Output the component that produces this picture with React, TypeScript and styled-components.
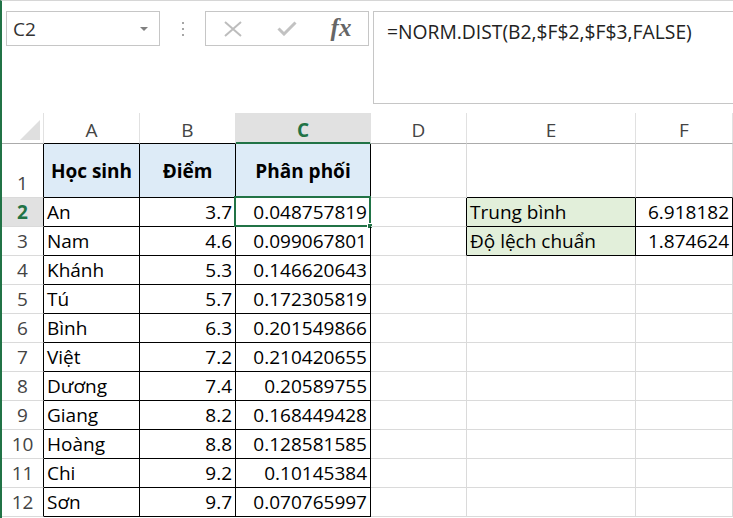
import React from "react";
import styled, { createGlobalStyle, css } from "styled-components";

const GREEN = "#217346";
const GRID = "#dadada";
const HDR_SEP = "#e1e1e1";
const BLACK = "#000";

const Global = createGlobalStyle`
  html, body { margin: 0; padding: 0; background: #fff; }
  body { font-family: "Open Sans", "Noto Sans", sans-serif; }
  * { box-sizing: border-box; }
`;

const Frame = styled.div`
  width: 733px;
  height: 518px;
  overflow: hidden;
  background: #fff;
  border-left: 2px solid ${GREEN};
  border-top: 1px solid #d6d6d6;
  display: flex;
  flex-direction: column;
`;

const Toolbar = styled.div`
  display: flex;
  align-items: flex-start;
  height: 103px;
  padding-top: 10px;
  padding-left: 4px;
`;

const NameBox = styled.div`
  width: 154px;
  height: 35px;
  border: 1px solid #c6c6c6;
  display: flex;
  align-items: center;
  justify-content: space-between;
  padding: 0 11px 0 6px;
  font-size: 19px;
  color: #333;
`;

const DropArrow = styled.span`
  width: 0;
  height: 0;
  border-left: 4px solid transparent;
  border-right: 4px solid transparent;
  border-top: 4px solid #808080;
  margin-top: 1px;
`;

const Grip = styled.div`
  width: 45px;
  height: 35px;
  display: flex;
  flex-direction: column;
  align-items: center;
  justify-content: center;
  gap: 4px;
  & > span {
    width: 2px;
    height: 2px;
    background: #a6a6a6;
  }
`;

const ButtonBox = styled.div`
  width: 164px;
  height: 35px;
  border: 1px solid #c6c6c6;
  display: grid;
  grid-template-columns: 54px 54px 54px;
  align-items: center;
  justify-items: center;
`;

const Fx = styled.span`
  font-family: "Liberation Serif", "DejaVu Serif", serif;
  font-style: italic;
  font-weight: 700;
  font-size: 25px;
  color: #666;
  line-height: 1;
  margin-top: -3px;
`;

const FormulaBar = styled.div`
  margin-left: 4px;
  flex: 1;
  height: 93px;
  border-left: 1px solid #c6c6c6;
  border-top: 1px solid #c6c6c6;
  border-bottom: 1px solid #c6c6c6;
  padding: 6px 0 0 13px;
  font-size: 19.3px;
  color: #222;
  white-space: nowrap;
`;

const Sheet = styled.div`
  margin-top: 9px;
  display: grid;
  grid-template-columns: 42px 96px 96px 135px 96px 169px 97px;
  grid-template-rows: 31px 54px repeat(11, 29px);
`;

const Corner = styled.div`
  position: relative;
  border-right: 1px solid ${HDR_SEP};
  border-bottom: 1px solid #ababab;
  &::after {
    content: "";
    position: absolute;
    right: 3px;
    bottom: 3px;
    width: 0;
    height: 0;
    border-left: 20px solid transparent;
    border-bottom: 20px solid #dfdfdf;
  }
`;

const ColHeader = styled.div<{ $sel?: boolean; $bb: string }>`
  display: flex;
  align-items: flex-end;
  justify-content: center;
  padding-bottom: 0px;
  font-size: 19px;
  color: #444;
  border-right: 1px solid ${HDR_SEP};
  border-bottom: 1px solid ${(p) => p.$bb};
  ${(p) =>
    p.$sel &&
    css`
      background: #e1e1e1;
      color: ${GREEN};
      font-weight: 700;
      border-bottom-color: ${GREEN};
      box-shadow: inset 0 -1px 0 ${GREEN};
    `}
`;

const RowHeader = styled.div<{ $sel?: boolean }>`
  display: flex;
  align-items: flex-end;
  justify-content: center;
  padding-bottom: 2px;
  font-size: 19px;
  line-height: 24px;
  color: #444;
  border-right: 1px solid ${BLACK};
  border-bottom: 1px solid ${GRID};
  ${(p) =>
    p.$sel &&
    css`
      background: #e1e1e1;
      color: ${GREEN};
      font-weight: 700;
    `}
`;

const Cell = styled.div<{
  $align: "left" | "right" | "center";
  $bold?: boolean;
  $fill?: string;
  $rb: string;
  $bb: string;
  $mid?: boolean;
}>`
  position: relative;
  display: flex;
  align-items: ${(p) => (p.$mid ? "center" : "flex-end")};
  justify-content: ${(p) =>
    p.$align === "left" ? "flex-start" : p.$align === "right" ? "flex-end" : "center"};
  padding: ${(p) => (p.$mid ? "0 3px" : "0 3px 2px 3px")};
  font-size: 19px;
  line-height: 24px;
  color: #000;
  font-weight: ${(p) => (p.$bold ? 700 : 400)};
  background: ${(p) => p.$fill || "transparent"};
  border-right: 1px solid ${(p) => p.$rb};
  border-bottom: 1px solid ${(p) => p.$bb};
  white-space: nowrap;
`;

const Selection = styled.div`
  position: absolute;
  left: -2px;
  top: -2px;
  right: -1px;
  bottom: -1px;
  border: 2px solid ${GREEN};
  pointer-events: none;
`;

const Handle = styled.span`
  position: absolute;
  right: -4px;
  bottom: -4px;
  width: 6px;
  height: 6px;
  background: ${GREEN};
  border: 1px solid #fff;
`;

const cols = ["A", "B", "C", "D", "E", "F"];

const students: [string, string, string][] = [
  ["An", "3.7", "0.048757819"],
  ["Nam", "4.6", "0.099067801"],
  ["Khánh", "5.3", "0.146620643"],
  ["Tú", "5.7", "0.172305819"],
  ["Bình", "6.3", "0.201549866"],
  ["Việt", "7.2", "0.210420655"],
  ["Dương", "7.4", "0.20589755"],
  ["Giang", "8.2", "0.168449428"],
  ["Hoàng", "8.8", "0.128581585"],
  ["Chi", "9.2", "0.10145384"],
  ["Sơn", "9.7", "0.070765997"],
];

const stats: Record<number, [string, string]> = {
  2: ["Trung bình", "6.918182"],
  3: ["Độ lệch chuẩn", "1.874624"],
};

function cellContent(r: number, c: number): { text: string; align: "left" | "right" | "center" } {
  if (r === 1) {
    const h = ["Học sinh", "Điểm", "Phân phối"];
    return { text: c < 3 ? h[c] : "", align: "center" };
  }
  if (c < 3) {
    const s = students[r - 2];
    return { text: s[c], align: c === 0 ? "left" : "right" };
  }
  if (stats[r] && c === 4) return { text: stats[r][0], align: "left" };
  if (stats[r] && c === 5) return { text: stats[r][1], align: "right" };
  return { text: "", align: "left" };
}

function borders(r: number, c: number) {
  const t1 = c <= 2;
  const t2 = (r === 2 || r === 3) && c >= 4;
  const rightBlack = t1 || t2 || (c === 3 && (r === 2 || r === 3));
  const bottomBlack = t1 || t2 || (r === 1 && c >= 4);
  return { rb: rightBlack ? BLACK : GRID, bb: bottomBlack ? BLACK : GRID };
}

const CancelIcon = () => (
  <svg width="20" height="16" viewBox="0 0 20 16">
    <path d="M2 1 L18 15 M18 1 L2 15" stroke="#bdbdbd" strokeWidth="2" fill="none" />
  </svg>
);

const EnterIcon = () => (
  <svg width="20" height="15" viewBox="0 0 20 15">
    <path d="M1.5 7.5 L7 13 L18.5 1.5" stroke="#c2c2c2" strokeWidth="3" fill="none" />
  </svg>
);

export default function App() {
  const rows = Array.from({ length: 12 }, (_, i) => i + 1);
  return (
    <>
      <Global />
      <Frame>
        <Toolbar>
          <NameBox>
            <span>C2</span>
            <DropArrow />
          </NameBox>
          <Grip>
            <span />
            <span />
            <span />
          </Grip>
          <ButtonBox>
            <CancelIcon />
            <EnterIcon />
            <Fx>fx</Fx>
          </ButtonBox>
          <FormulaBar>=NORM.DIST(B2,$F$2,$F$3,FALSE)</FormulaBar>
        </Toolbar>
        <Sheet>
          <Corner />
          {cols.map((l, i) => (
            <ColHeader key={l} $sel={l === "C"} $bb={i <= 1 ? BLACK : "#ababab"}>
              {l}
            </ColHeader>
          ))}
          {rows.map((r) => (
            <React.Fragment key={r}>
              <RowHeader $sel={r === 2}>{r}</RowHeader>
              {cols.map((_, c) => {
                const { text, align } = cellContent(r, c);
                const { rb, bb } = borders(r, c);
                let fill: string | undefined;
                if (r === 1 && c <= 2) fill = "#ddebf7";
                if ((r === 2 || r === 3) && c === 4) fill = "#e2efda";
                return (
                  <Cell
                    key={c}
                    $align={align}
                    $bold={r === 1}
                    $mid={r === 1}
                    $fill={fill}
                    $rb={rb}
                    $bb={bb}
                  >
                    {text}
                    {r === 2 && c === 2 && (
                      <Selection>
                        <Handle />
                      </Selection>
                    )}
                  </Cell>
                );
              })}
            </React.Fragment>
          ))}
        </Sheet>
      </Frame>
    </>
  );
}
